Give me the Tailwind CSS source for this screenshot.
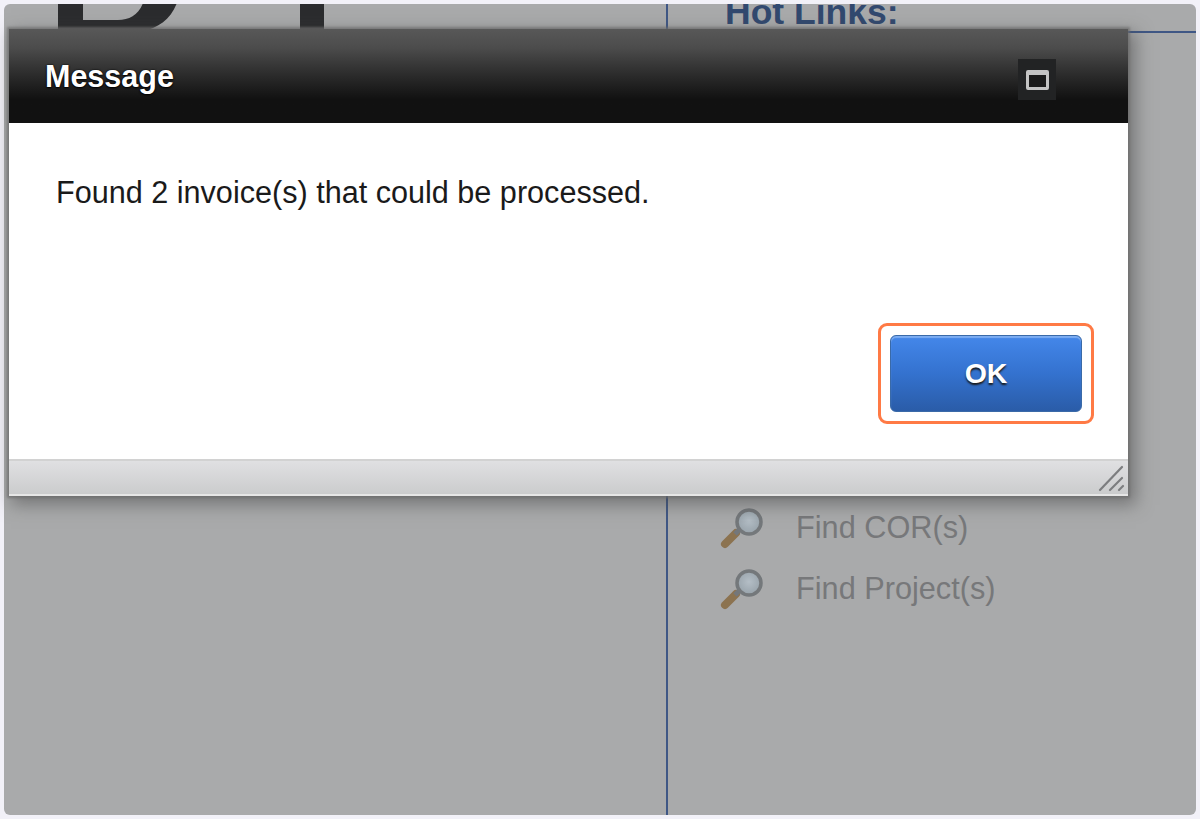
<!DOCTYPE html>
<html lang="en">
<head>
    <meta charset="UTF-8">
    <meta name="viewport" content="width=device-width, initial-scale=1.0">
    <title>Message</title>
    <script src="https://cdn.jsdelivr.net/npm/@tailwindcss/browser@4"></script>
</head>
<body class="bg-[#f2f1f8] font-['Liberation_Sans',Arial,sans-serif] overflow-hidden">
    <div class="relative w-[1200px] h-[819px] p-[4px] overflow-hidden">
        <!-- page behind the dimmed overlay -->
        <div class="flex w-full h-[811px] rounded-[6px] overflow-hidden bg-[#a9aaab]">
            <div class="w-[664px] shrink-0 border-r-2 border-[#3f5785] overflow-hidden">
                <svg class="ml-[50px]" width="290" height="40" viewBox="54 4 290 40" fill="#2b2c2e">
                    <path d="M58 0H83V20H118C130 20 140 14 144 0H178C172 18 160 28 140 32H58Z"/>
                    <rect x="300" y="0" width="24" height="44"/>
                </svg>
            </div>
            <div class="flex-1 overflow-hidden">
                <div class="h-[29px] border-b-2 border-[#3f5785] overflow-hidden">
                    <h2 class="ml-[57px] -mt-[11px] text-[35.5px] leading-[38px] font-bold text-[#32496f]">Hot Links:</h2>
                </div>
                <ul class="mt-[464px] ml-[52px] flex flex-col text-[30.7px] leading-[61px] text-[#77787a]">
                    <li class="flex items-center h-[61px]">
                        <svg class="w-[44px] h-[44px] shrink-0" viewBox="0 0 44 44">
                            <defs>
                                <radialGradient id="lens" cx="50%" cy="45%" r="55%">
                                    <stop offset="0%" stop-color="#b4bec6"/>
                                    <stop offset="100%" stop-color="#97a2aa"/>
                                </radialGradient>
                            </defs>
                            <path d="M5 38 L16 27" stroke="#8c7350" stroke-width="8" stroke-linecap="round"/>
                            <path d="M15 28 L20 23" stroke="#74777a" stroke-width="5"/>
                            <circle cx="29" cy="16" r="12" fill="url(#lens)" stroke="#74787b" stroke-width="3.5"/>
                        </svg>
                        <span class="ml-[32px]">Find COR(s)</span>
                    </li>
                    <li class="flex items-center h-[61px]">
                        <svg class="w-[44px] h-[44px] shrink-0" viewBox="0 0 44 44">
                            <path d="M5 38 L16 27" stroke="#8c7350" stroke-width="8" stroke-linecap="round"/>
                            <path d="M15 28 L20 23" stroke="#74777a" stroke-width="5"/>
                            <circle cx="29" cy="16" r="12" fill="url(#lens)" stroke="#74787b" stroke-width="3.5"/>
                        </svg>
                        <span class="ml-[32px]">Find Project(s)</span>
                    </li>
                </ul>
            </div>
        </div>

        <!-- dialog -->
        <div class="absolute left-[9px] top-[29px] w-[1119px] h-[467px] flex flex-col bg-white shadow-[0_0_2px_2px_rgba(110,110,110,0.7),5px_6px_16px_3px_rgba(70,70,70,0.5)]">
            <div class="h-[94px] shrink-0 flex items-center justify-between pl-[36px] pr-[72px] bg-linear-to-b from-[#585858] via-[#4c4c4c] via-20% to-[#111111] to-75%">
                <span class="mt-[2px] text-[30.5px] font-bold text-white [text-shadow:0_0_2px_#000,0_1px_2px_#000]">Message</span>
                <button class="mt-[7px] w-[38px] h-[41px] flex items-center justify-center bg-[#222324]">
                    <span class="block w-[23px] h-[20px] border-[3px] border-t-[5px] border-[#c4c4c4] rounded-[2px] bg-[#1b1b1b]"></span>
                </button>
            </div>
            <div class="flex-1 flex flex-col pl-[47px] pr-[34px] pt-[52px] pb-[35px]">
                <p class="text-[30.6px] leading-[34px] text-[#1a1a1a]">Found 2 invoice(s) that could be processed.</p>
                <div class="mt-auto flex justify-end">
                    <div class="p-[9px] border-[3px] border-[#ff7a45] rounded-[9px]">
                        <button class="block w-[192px] h-[77px] rounded-[6px] border border-[#3a6aa8] bg-linear-to-b from-[#4487ea] via-[#3472cf] to-[#2a5ca8] shadow-[inset_0_2px_1px_rgba(150,190,245,0.7)] text-[28.5px] font-bold text-white [text-shadow:0_2px_2px_#1a1a1a]">OK</button>
                    </div>
                </div>
            </div>
            <div class="relative h-[37px] shrink-0 border-t-2 border-b-2 border-t-[#d2d2d2] border-b-[#e6e6e6] bg-linear-to-b from-[#e0e0e2] to-[#cbcccd]">
                <svg class="absolute right-[3px] bottom-[2px]" width="28" height="28" viewBox="0 0 28 28" fill="none" stroke="#7c7d7f" stroke-width="2.2" stroke-linecap="round">
                    <path d="M3 26 L25 3"/>
                    <path d="M13 26 L25 14"/>
                    <path d="M22 26 L26 22"/>
                </svg>
            </div>
        </div>
    </div>
</body>
</html>
